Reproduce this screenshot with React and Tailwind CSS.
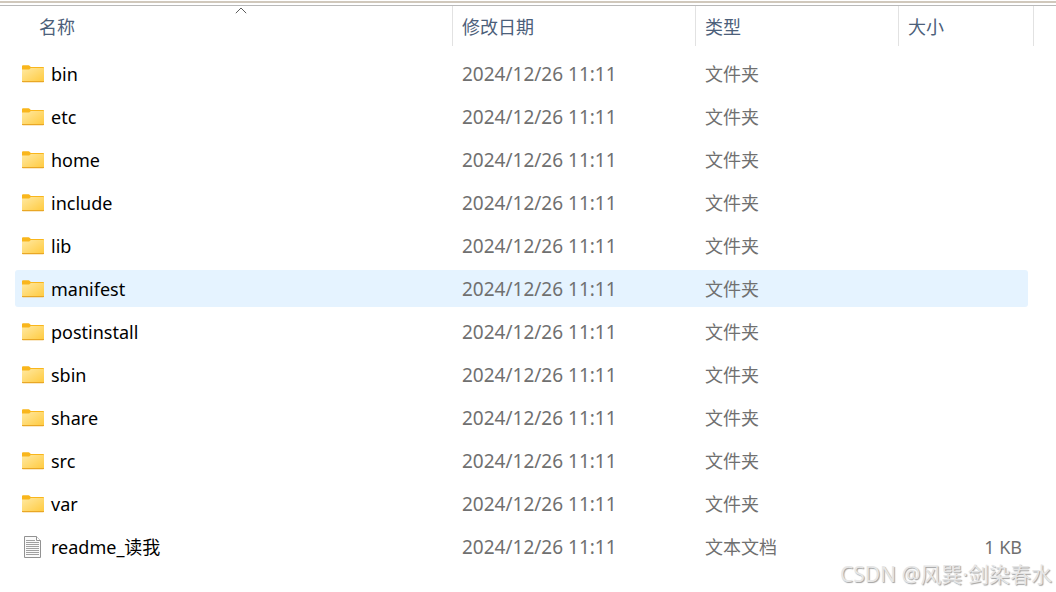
import React from "react";

const folders = [
  "bin",
  "etc",
  "home",
  "include",
  "lib",
  "manifest",
  "postinstall",
  "sbin",
  "share",
  "src",
  "var",
];

const files = [
  ...folders.map((name) => ({ name, type: "文件夹", size: "", folder: true })),
  { name: "readme_读我", type: "文本文档", size: "1 KB", folder: false },
];

const FolderIcon = () => (
  <svg width="22" height="18" viewBox="0 0 22 18" className="shrink-0">
    <defs>
      <linearGradient id="folder" x1="0" y1="0" x2="1" y2="1">
        <stop offset="0" stopColor="#ffe9a2" />
        <stop offset="1" stopColor="#ffca3e" />
      </linearGradient>
    </defs>
    <path d="M0 1.2Q0 .3 1 .3H6.6Q7.2.3 7.6.8L8.8 2H21.2Q22 2 22 2.8V6H0Z" fill="#f9b61c" />
    <path d="M0 4.4H7.2L8.8 3H21.4Q22 3 22 3.6V16.4Q22 17 21.4 17H.6Q0 17 0 16.4Z" fill="url(#folder)" />
    <path d="M0 16H22V16.4Q22 17.2 21.2 17.2H.8Q0 17.2 0 16.4Z" fill="#e9a725" />
  </svg>
);

const TextIcon = () => (
  <svg width="22" height="22" viewBox="0 0 22 22" className="shrink-0">
    <path d="M2.5.5H14.5L18.5 4.5V21.5H2.5Z" fill="#fafafa" stroke="#929292" />
    <path d="M14.5.5V4.5H18.5" fill="#fff" stroke="#929292" />
    <path
      d="M4 4.5H13M4 6.5H17M4 8.5H17M4 10.5H17M4 12.5H17M4 14.5H17M4 16.5H17M4 18.5H17"
      stroke="#a0a0a0"
    />
  </svg>
);

const HeaderCell = ({ children, first }) => (
  <th className="p-0 pb-[6px] text-left font-normal">
    <button
      type="button"
      className={
        first
          ? "block h-10 w-full pt-0.5 pl-6 text-left"
          : "block h-10 w-full border-l border-[#e2e2e2] pt-0.5 pl-[9px] text-left"
      }
    >
      {children}
    </button>
  </th>
);

const App = () => {
  const selected = "manifest";

  return (
    <div className="relative min-h-screen bg-white font-['Noto_Sans','Noto_Sans_CJK_SC',sans-serif] text-[18px] leading-6">
      <div className="h-[6px] border-b border-[#b9b9b9] pt-px">
        <div className="h-[2px] bg-[#d0c8bc]" />
      </div>

      <div className="relative pr-[22px] pl-[15px]">
        <table className="w-full table-fixed border-separate border-spacing-0">
          <colgroup>
            <col />
            <col className="w-[243px]" />
            <col className="w-[203px]" />
            <col className="w-[130px]" />
            <col className="w-[6px]" />
          </colgroup>
          <thead className="text-[#4c607a]">
            <tr>
              <HeaderCell first>
                名称
                <svg
                  width="12"
                  height="7"
                  viewBox="0 0 12 7"
                  className="absolute top-[1px] left-[235px]"
                >
                  <path d="M.8 6.2 6 1 11.2 6.2" fill="none" stroke="#5c5c5c" />
                </svg>
              </HeaderCell>
              <HeaderCell>修改日期</HeaderCell>
              <HeaderCell>类型</HeaderCell>
              <th className="p-0 pb-[6px] text-left font-normal" colSpan={2}>
                <button
                  type="button"
                  className="block h-10 w-full border-x border-[#e2e2e2] pt-0.5 pl-[9px] text-left"
                >
                  大小
                </button>
              </th>
            </tr>
          </thead>
          <tbody className="text-[#707070]">
            {files.map((file) => {
              const bg = file.name === selected ? "bg-[#e5f3ff]" : "";
              return (
                <tr key={file.name}>
                  <td className="p-0 py-[3px]">
                    <div
                      className={`flex h-[37px] items-center gap-[7px] rounded-l-[3px] pl-[7px] text-black ${bg}`}
                    >
                      {file.folder ? <FolderIcon /> : <TextIcon />}
                      <span>{file.name}</span>
                    </div>
                  </td>
                  <td className="p-0 py-[3px]">
                    <div className={`flex h-[37px] items-center pl-[10px] text-[19px] ${bg}`}>
                      2024/12/26 11:11
                    </div>
                  </td>
                  <td className="p-0 py-[3px]">
                    <div className={`flex h-[37px] items-center pl-[10px] ${bg}`}>{file.type}</div>
                  </td>
                  <td className="p-0 py-[3px]">
                    <div
                      className={`flex h-[37px] items-center justify-end rounded-r-[3px] pr-[6px] ${bg}`}
                    >
                      {file.size}
                    </div>
                  </td>
                  <td className="p-0" />
                </tr>
              );
            })}
          </tbody>
        </table>
      </div>

      <div className="absolute right-1 bottom-[6px] text-[21px] text-[#e6e6e6] [text-shadow:1px_1px_1px_#a0a0a0]">
        CSDN @风巽·剑染春水
      </div>
    </div>
  );
};

export default App;
